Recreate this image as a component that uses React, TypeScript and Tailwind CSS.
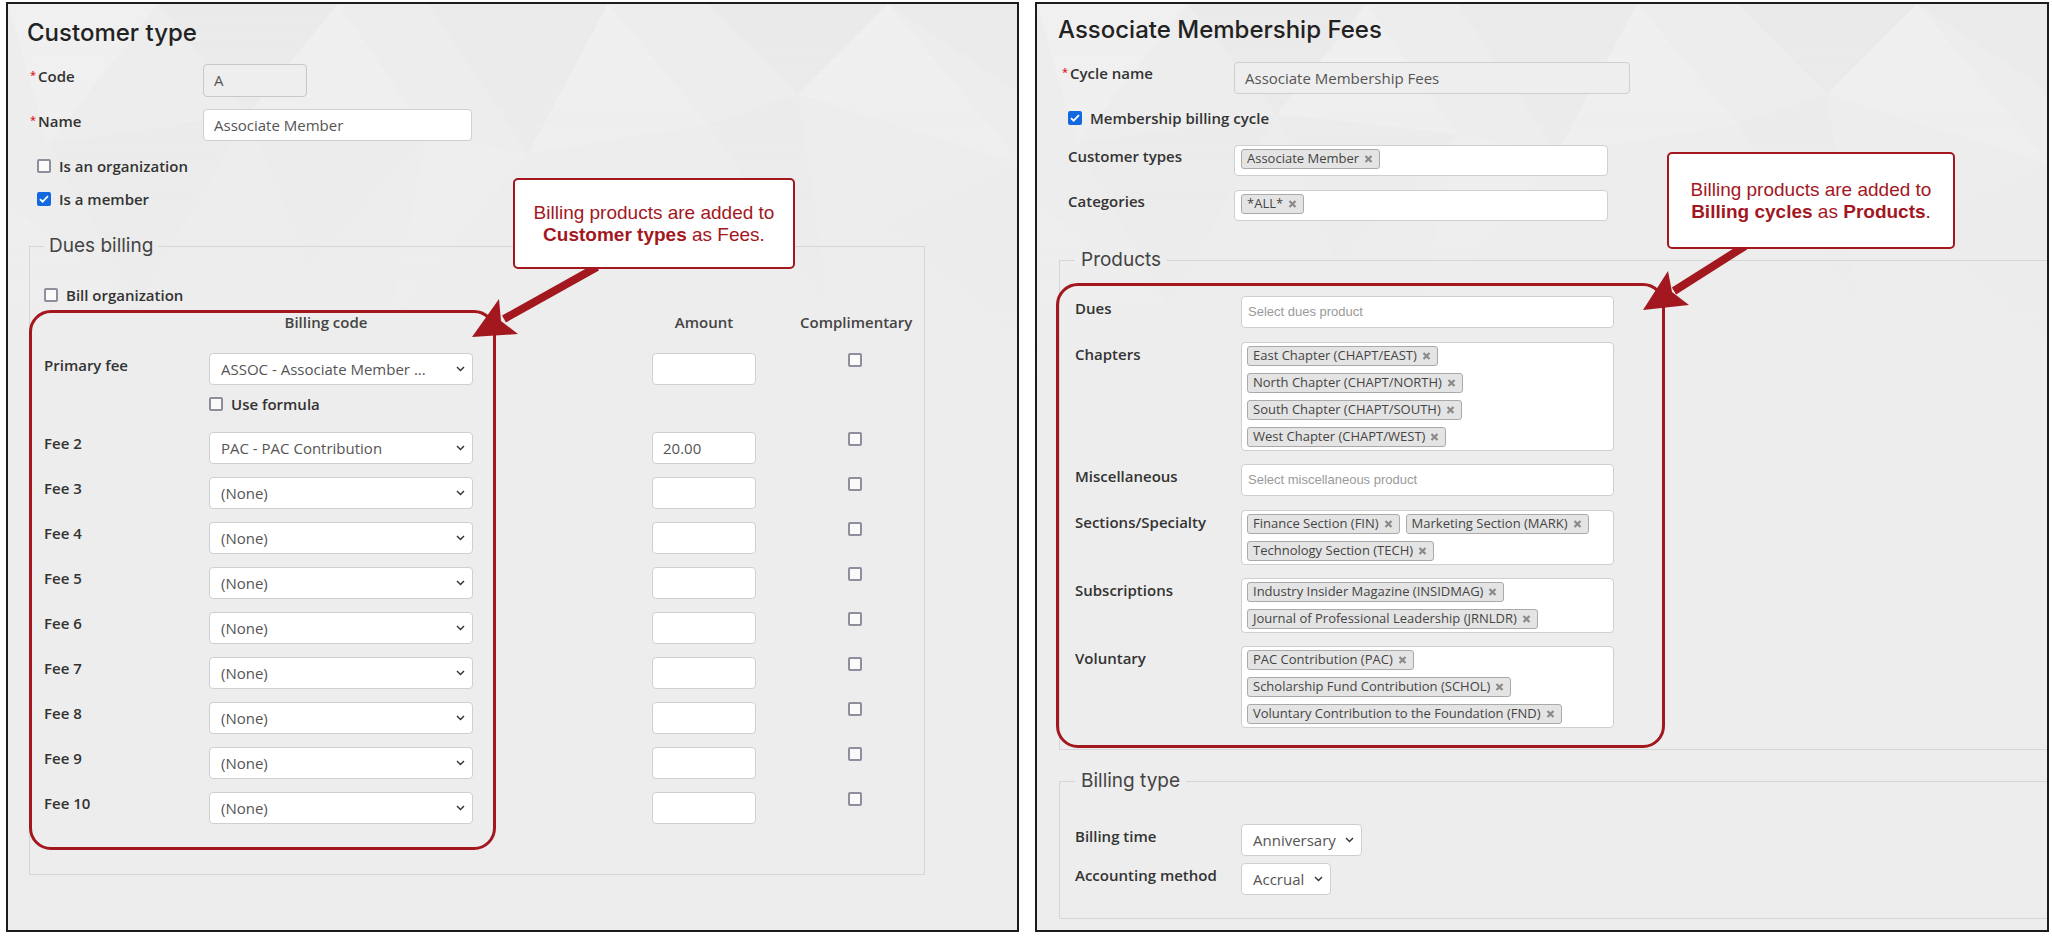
import React from 'react';

const Req = () => <span className="mr-[2px] align-[3px] text-[11px] leading-none text-[#e0242a]">*</span>;

function Check({ checked = false }: { checked?: boolean }) {
  if (checked) {
    return (
      <span className="flex h-[14px] w-[14px] shrink-0 items-center justify-center rounded-[2px] bg-[#1268de]">
        <svg width="10" height="8" viewBox="0 0 10 8">
          <path d="M1 4.2l2.6 2.5L9 1.2" fill="none" stroke="#fff" strokeWidth="1.8" />
        </svg>
      </span>
    );
  }
  return <span className="block h-[14px] w-[14px] shrink-0 rounded-[2px] border-2 border-[#8e8e9c] bg-[#fafafa]" />;
}

const Chevron = () => (
  <svg width="9" height="6" viewBox="0 0 9 6" className="shrink-0">
    <path d="M1 1l3.5 3.6L8 1" fill="none" stroke="#333" strokeWidth="1.4" />
  </svg>
);

function Select({ value, className }: { value: string; className: string }) {
  return (
    <div className={`flex h-[32px] shrink-0 items-center justify-between rounded-[4px] border border-[#cfcfcf] bg-white pl-[11px] pr-[7px] text-[15px] text-[#555] ${className}`}>
      <span className="truncate">{value}</span>
      <Chevron />
    </div>
  );
}

function Tag({ label }: { label: string }) {
  return (
    <span className="flex h-[20px] items-center rounded-[3px] border border-[#aaaaaa] bg-[#e4e4e4] pl-[5px] pr-[6px] text-[13px] text-[#444]">
      {label}
      <svg width="9" height="8" viewBox="0 0 9 8" className="ml-[5px]">
        <path d="M1.5 1l6 6M7.5 1l-6 6" stroke="#8a8a8a" strokeWidth="2.2" />
      </svg>
    </span>
  );
}

function Pattern({ id }: { id: string }) {
  return (
    <svg className="pointer-events-none absolute left-0 top-0" width="1014" height="430" viewBox="0 0 1014 430">
      <defs>
        <linearGradient id={`${id}-g`} x1="0" y1="0" x2="0" y2="1">
          <stop offset="0" stopColor="#fff" stopOpacity="1" />
          <stop offset="1" stopColor="#fff" stopOpacity="0" />
        </linearGradient>
        <mask id={`${id}-m`}>
          <rect width="1014" height="430" fill={`url(#${id}-g)`} />
        </mask>
      </defs>
      <g mask={`url(#${id}-m)`} opacity="0.45">
        <polygon points="0,0 150,0 40,140" fill="#f4f4f4" />
        <polygon points="150,0 330,0 240,110" fill="#e7e7e7" />
        <polygon points="240,110 330,0 420,130" fill="#f3f3f3" />
        <polygon points="420,0 600,0 520,150" fill="#e8e8e8" />
        <polygon points="520,150 600,0 700,120" fill="#f3f3f3" />
        <polygon points="700,0 880,0 790,90" fill="#e6e6e6" />
        <polygon points="790,90 880,0 1014,160" fill="#f3f3f3" />
        <polygon points="880,0 1014,0 1014,90" fill="#e8e8e8" />
        <polygon points="40,140 240,110 130,300" fill="#e8e8e8" />
        <polygon points="420,130 520,150 380,320" fill="#f2f2f2" />
        <polygon points="700,120 790,90 820,300" fill="#e8e8e8" />
        <polygon points="0,200 130,300 0,380" fill="#f2f2f2" />
        <polygon points="240,110 420,130 300,260" fill="#e9e9e9" />
        <polygon points="880,220 1014,160 1014,340" fill="#e9e9e9" />
      </g>
    </svg>
  );
}

const fees = [
  { label: 'Fee 2', code: 'PAC - PAC Contribution', amount: '20.00' },
  ...[3, 4, 5, 6, 7, 8, 9, 10].map((n) => ({ label: `Fee ${n}`, code: '(None)', amount: '' })),
];

function FeeRow({ label, code, amount, className }: { label: string; code: string; amount: string; className: string }) {
  return (
    <div className={`flex items-start ${className}`}>
      <div className="w-[165px] pt-[1px] font-semibold leading-[20px] text-[#333]">{label}</div>
      <Select value={code} className="w-[264px]" />
      <div className="w-[179px]" />
      <div className="h-[32px] w-[104px] rounded-[4px] border border-[#cfcfcf] bg-white pl-[10px] leading-[30px] text-[#555]">{amount}</div>
      <div className="w-[160px] pl-[92px]">
        <Check />
      </div>
    </div>
  );
}

function CustomerType() {
  return (
    <div className="relative h-[930px] w-[1013px] shrink-0 overflow-hidden border-2 border-[#1c1c1c] bg-[#ededed] text-[15px]">
      <Pattern id="pl" />
      <div className="relative">
        <h1 className="ml-[19px] mt-[13px] h-[32px] text-[24px] font-medium leading-[32px] text-[#222] [font-family:Inter,sans-serif]">Customer type</h1>

        <div className="mt-[15px] flex items-start pl-[22px]">
          <div className="w-[173px] pt-[2px] font-semibold leading-[20px] text-[#333]"><Req />Code</div>
          <div className="h-[33px] w-[104px] rounded-[4px] border border-[#c8c8c8] bg-[#eeeeee] pl-[10px] leading-[31px] text-[#555]">A</div>
        </div>
        <div className="mt-[12px] flex items-start pl-[22px]">
          <div className="w-[173px] pt-[2px] font-semibold leading-[20px] text-[#333]"><Req />Name</div>
          <div className="h-[32px] w-[269px] rounded-[4px] border border-[#cfcfcf] bg-white pl-[10px] leading-[30px] text-[#555]">Associate Member</div>
        </div>

        <div className="mt-[15px] flex h-[20px] items-center gap-[8px] pl-[29px] font-semibold text-[#333]">
          <Check />Is an organization
        </div>
        <div className="mt-[13px] flex h-[20px] items-center gap-[8px] pl-[29px] font-semibold text-[#333]">
          <Check checked />Is a member
        </div>

        <fieldset className="ml-[21px] mt-[25px] w-[896px] min-w-0 border border-[#d6d6d6] pb-[50px] pl-[14px]">
          <legend className="px-[5px] text-[19px] leading-[24px] text-[#444] [font-family:Inter,sans-serif]">Dues billing</legend>
          <div className="mt-[27px] flex h-[20px] items-center gap-[8px] font-semibold text-[#333]">
            <Check />Bill organization
          </div>
          <div className="mt-[7px] flex h-[20px] items-center font-semibold leading-[20px] text-[#444]">
            <div className="w-[165px]" />
            <div className="w-[264px] pr-[30px] text-center">Billing code</div>
            <div className="w-[179px]" />
            <div className="w-[104px] text-center">Amount</div>
            <div className="w-[160px] pl-[44px] whitespace-nowrap">Complimentary</div>
          </div>

          <div className="mt-[21px] flex items-start">
            <div className="w-[165px] pt-[2px] font-semibold leading-[20px] text-[#333]">Primary fee</div>
            <Select value="ASSOC - Associate Member ..." className="w-[264px]" />
            <div className="w-[179px]" />
            <div className="h-[32px] w-[104px] rounded-[4px] border border-[#cfcfcf] bg-white" />
            <div className="w-[160px] pl-[92px]">
              <Check />
            </div>
          </div>
          <div className="mt-[9px] flex h-[20px] items-center gap-[8px] pl-[165px] font-semibold text-[#333]">
            <Check />Use formula
          </div>

          {fees.map((f, i) => (
            <FeeRow key={f.label} {...f} className={i === 0 ? 'mt-[18px]' : 'mt-[13px]'} />
          ))}
        </fieldset>
      </div>
    </div>
  );
}

function ProductRow({ label, children, className }: { label: string; children: React.ReactNode; className: string }) {
  return (
    <div className={`flex items-start ${className}`}>
      <div className="w-[166px] shrink-0 pt-[2px] font-semibold leading-[20px] text-[#333]">{label}</div>
      {children}
    </div>
  );
}

const Multi = ({ tags }: { tags: string[] }) => (
  <div className="flex w-[373px] flex-wrap content-start gap-x-[6px] gap-y-[7px] rounded-[4px] border border-[#cfcfcf] bg-white px-[5px] py-[3px]">
    {tags.map((t) => (
      <Tag key={t} label={t} />
    ))}
  </div>
);

const Placeholder = ({ text }: { text: string }) => (
  <div className="flex h-[32px] w-[373px] items-center rounded-[4px] border border-[#cfcfcf] bg-white pl-[6px] text-[13px] text-[#9a9a9a] [font-family:'Liberation_Sans',Arial,sans-serif]">
    {text}
  </div>
);

function BillingCycle() {
  return (
    <div className="relative h-[930px] w-[1014px] shrink-0 overflow-hidden border-2 border-[#1c1c1c] bg-[#ededed] text-[15px]">
      <Pattern id="pr" />
      <div className="relative">
        <h1 className="ml-[21px] mt-[10px] h-[32px] text-[24px] font-medium leading-[32px] text-[#222] [font-family:Inter,sans-serif]">Associate Membership Fees</h1>

        <div className="mt-[16px] flex items-start pl-[25px]">
          <div className="w-[172px] pt-[1px] font-semibold leading-[20px] text-[#333]"><Req />Cycle name</div>
          <div className="h-[32px] w-[396px] rounded-[4px] border border-[#cfcfcf] bg-[#eeeeee] pl-[10px] leading-[30px] text-[#555]">Associate Membership Fees</div>
        </div>

        <div className="mt-[14px] flex h-[20px] items-center gap-[8px] pl-[31px] font-semibold text-[#333]">
          <Check checked />Membership billing cycle
        </div>

        <div className="mt-[17px] flex items-start pl-[31px]">
          <div className="w-[166px] pt-[1px] font-semibold leading-[20px] text-[#333]">Customer types</div>
          <div className="flex h-[31px] w-[374px] items-start rounded-[4px] border border-[#cfcfcf] bg-white px-[6px] py-[3px]">
            <Tag label="Associate Member" />
          </div>
        </div>
        <div className="mt-[14px] flex items-start pl-[31px]">
          <div className="w-[166px] pt-[1px] font-semibold leading-[20px] text-[#333]">Categories</div>
          <div className="flex h-[31px] w-[374px] items-start rounded-[4px] border border-[#cfcfcf] bg-white px-[6px] py-[3px]">
            <Tag label="*ALL*" />
          </div>
        </div>

        <fieldset className="ml-[22px] mt-[27px] w-[1100px] border border-[#d6d6d6] pb-[21px] pl-[15px]">
          <legend className="px-[6px] text-[19px] leading-[24px] text-[#444] [font-family:Inter,sans-serif]">Products</legend>
          <ProductRow label="Dues" className="mt-[24px]">
            <Placeholder text="Select dues product" />
          </ProductRow>
          <ProductRow label="Chapters" className="mt-[14px]">
            <Multi tags={['East Chapter (CHAPT/EAST)', 'North Chapter (CHAPT/NORTH)', 'South Chapter (CHAPT/SOUTH)', 'West Chapter (CHAPT/WEST)']} />
          </ProductRow>
          <ProductRow label="Miscellaneous" className="mt-[13px]">
            <Placeholder text="Select miscellaneous product" />
          </ProductRow>
          <ProductRow label="Sections/Specialty" className="mt-[14px]">
            <Multi tags={['Finance Section (FIN)', 'Marketing Section (MARK)', 'Technology Section (TECH)']} />
          </ProductRow>
          <ProductRow label="Subscriptions" className="mt-[13px]">
            <Multi tags={['Industry Insider Magazine (INSIDMAG)', 'Journal of Professional Leadership (JRNLDR)']} />
          </ProductRow>
          <ProductRow label="Voluntary" className="mt-[13px]">
            <Multi tags={['PAC Contribution (PAC)', 'Scholarship Fund Contribution (SCHOL)', 'Voluntary Contribution to the Foundation (FND)']} />
          </ProductRow>
        </fieldset>

        <fieldset className="ml-[22px] mt-[19px] w-[1100px] border border-[#d6d6d6] pb-[23px] pl-[15px]">
          <legend className="px-[6px] text-[19px] leading-[24px] text-[#444] [font-family:Inter,sans-serif]">Billing type</legend>
          <ProductRow label="Billing time" className="mt-[31px]">
            <Select value="Anniversary" className="w-[121px] pl-[10px]" />
          </ProductRow>
          <ProductRow label="Accounting method" className="mt-[7px]">
            <Select value="Accrual" className="w-[90px] pl-[10px]" />
          </ProductRow>
        </fieldset>
      </div>
    </div>
  );
}

export default function App() {
  return (
    <div className="relative h-[941px] w-[2052px] overflow-hidden bg-white [font-family:'Open_Sans',sans-serif]">
      <div className="flex gap-[16px] pl-[6px] pt-[2px]">
        <CustomerType />
        <BillingCycle />
      </div>

      {/* annotation overlays */}
      <div className="absolute left-[29px] top-[310px] h-[540px] w-[467px] rounded-[22px] border-[3px] border-[#a3171f]" />
      <div className="absolute left-[1056px] top-[283px] h-[465px] w-[609px] rounded-[22px] border-[3px] border-[#a3171f]" />

      <svg className="pointer-events-none absolute left-0 top-0" width="2052" height="941">
        <line x1="597" y1="267" x2="504" y2="319" stroke="#a3171f" strokeWidth="8" />
        <polygon points="499,299 472,337 518,334 501,321" fill="#a3171f" />
        <line x1="1745" y1="246" x2="1674" y2="291" stroke="#a3171f" strokeWidth="8" />
        <polygon points="1668,271 1643,310 1689,305 1672,292" fill="#a3171f" />
      </svg>

      <div className="absolute left-[513px] top-[178px] flex h-[91px] w-[282px] flex-col items-center justify-center rounded-[5px] border-2 border-[#a3171f] bg-white text-center text-[19px] leading-[22px] text-[#a3171f] [font-family:'Liberation_Sans',Arial,sans-serif]">
        <div>Billing products are added to</div>
        <div><b>Customer types</b> as Fees.</div>
      </div>
      <div className="absolute left-[1667px] top-[152px] flex h-[97px] w-[288px] flex-col items-center justify-center rounded-[5px] border-2 border-[#a3171f] bg-white text-center text-[19px] leading-[22px] text-[#a3171f] [font-family:'Liberation_Sans',Arial,sans-serif]">
        <div>Billing products are added to</div>
        <div><b>Billing cycles</b> as <b>Products</b>.</div>
      </div>
    </div>
  );
}
